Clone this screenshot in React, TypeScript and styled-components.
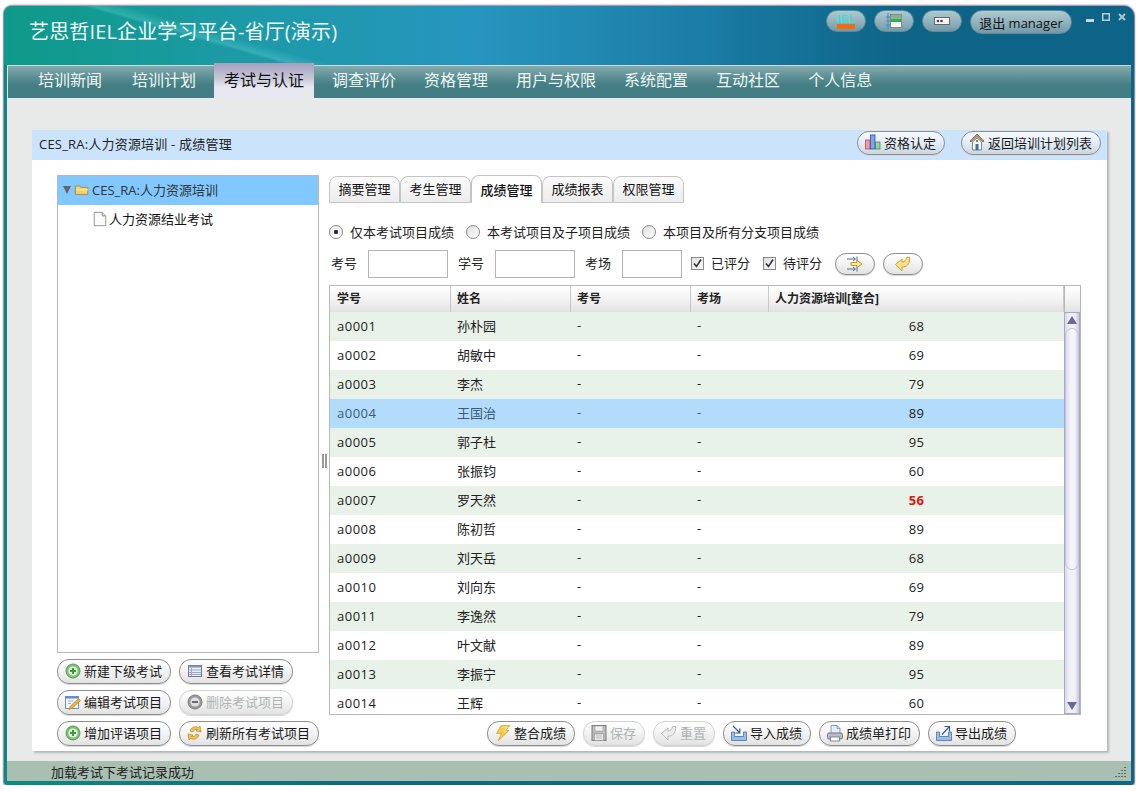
import React from "react";
import styled, { createGlobalStyle } from "styled-components";

const GlobalStyle = createGlobalStyle`
  html, body {
    margin: 0;
    padding: 0;
    background: #fff;
    font-family: "Open Sans", "Noto Sans CJK SC", sans-serif;
    font-size: 13px;
    color: #222;
  }
`;

const Window = styled.div`
  margin: 6px 0 0 4px;
  width: 1130px;
  height: 779px;
  box-sizing: border-box;
  display: flex;
  flex-direction: column;
  padding: 0 3px 4px;
  border-radius: 8px 10px 3px 3px;
  background: linear-gradient(90deg, #0c8a80 0, #10697f 30%, #0e6487 100%);
  box-shadow: 0 -1px 2px #8c88a4, 0 1px 2px #8c88a4, -1px 0 1px #9a98b0, 1px 0 1px #6f7f94;
`;

const Header = styled.div`
  height: 59px;
  margin: 0 -3px;
  padding: 0 8px 0 25px;
  display: flex;
  align-items: flex-start;
  justify-content: space-between;
  border-radius: 8px 10px 0 0;
  background:
    linear-gradient(16deg, transparent 0 50%, rgba(120, 225, 225, 0.28) 52%, transparent 58%) 0 0 / 360px 100% no-repeat,
    linear-gradient(90deg, #0e9a88 0, #1d9aa8 22%, #2795bf 42%, #1b7ca5 62%, #0e6487 80%, #0e6487 100%);
`;

const AppTitle = styled.div`
  margin-top: 11px;
  font-size: 20px;
  line-height: 30px;
  letter-spacing: 0.15px;
  color: #f2fbfb;
  white-space: nowrap;
`;

const HeaderTools = styled.div`
  display: flex;
  align-items: flex-start;
  margin-top: 4px;
  gap: 8px;
`;

const HeaderPill = styled.div<{ $wide?: boolean }>`
  width: ${({ $wide }) => ($wide ? "102px" : "40px")};
  height: ${({ $wide }) => ($wide ? "24px" : "22px")};
  box-sizing: border-box;
  display: flex;
  align-items: center;
  justify-content: center;
  border: 1px solid #5f8a9c;
  border-radius: 12px;
  background: linear-gradient(180deg, #aecad2 0, #93b3bd 50%, #739aa9 100%);
  font-size: 13px;
  color: #111;
  white-space: nowrap;
`;

const WindowControls = styled.div`
  display: flex;
  margin-left: 6px;
  margin-top: 3px;
  gap: 8px;
`;

const Nav = styled.div`
  height: 33px;
  box-sizing: border-box;
  display: flex;
  align-items: stretch;
  gap: 8px;
  padding-left: 20px;
  border-top: 1px solid #c8dcdd;
  border-left: 1px solid #d8e6e6;
  background: linear-gradient(180deg, #86abaf 0, #5c8f94 35%, #427e83 60%, #427e83 100%);
`;

const NavItem = styled.div<{ $active?: boolean }>`
  padding: 0 10px;
  font-size: 16px;
  line-height: 28px;
  white-space: nowrap;
  color: ${({ $active }) => ($active ? "#111" : "#eef6f6")};
  &:first-child {
    margin-right: 2px;
  }
  ${({ $active }) =>
    $active &&
    `
    margin-top: -3px;
    line-height: 34px;
    background: linear-gradient(180deg, #a3a1bd 0, #c9c8da 45%, #e8e8f2 70%, #e8e8f2 100%);
  `}
`;

const Content = styled.div`
  flex: 1;
  min-height: 0;
  padding: 32px 24px 10px 25px;
  background: #e8eaea;
`;

const Card = styled.div`
  height: 100%;
  display: flex;
  flex-direction: column;
  background: #fff;
  box-shadow: 2px 2px 2px #b4b6b6;
`;

const CardTitle = styled.div`
  height: 30px;
  flex: none;
  box-sizing: border-box;
  display: flex;
  align-items: center;
  justify-content: space-between;
  padding: 0 6px 4px 7px;
  background: #cce4fb;
  color: #222;
`;

const CardHeading = styled.span`
  letter-spacing: 0.2px;
`;

const TitleActions = styled.div`
  display: flex;
  gap: 16px;
`;

const CardBody = styled.div`
  flex: 1;
  min-height: 0;
  display: grid;
  grid-template-columns: 262px 10px 752px;
  padding: 15px 25px 5px;
`;

const LeftColumn = styled.div`
  display: flex;
  flex-direction: column;
  min-height: 0;
`;

const Tree = styled.div`
  flex: 1;
  border: 1px solid #b8b8b8;
  background: #fff;
`;

const TreeRoot = styled.div`
  height: 29px;
  box-sizing: border-box;
  display: flex;
  align-items: center;
  padding: 0 0 2px 5px;
  gap: 2px;
  background: #80c8ff;
  color: #333;
`;

const TreeChild = styled.div`
  height: 29px;
  box-sizing: border-box;
  display: flex;
  align-items: center;
  padding: 0 0 2px 34px;
  gap: 1px;
  color: #111;
`;

const Caret = styled.span`
  width: 0;
  height: 0;
  margin-right: 1px;
  border-left: 4px solid transparent;
  border-right: 4px solid transparent;
  border-top: 8px solid #666;
`;

const ActionRows = styled.div`
  display: flex;
  flex-direction: column;
  gap: 6px;
  margin-top: 6px;
`;

const ActionRow = styled.div`
  display: flex;
  gap: 8px;
`;

const PillButton = styled.div<{ $disabled?: boolean }>`
  height: 25px;
  box-sizing: border-box;
  display: inline-flex;
  align-items: center;
  justify-content: center;
  gap: 2px;
  padding: 0 8px 2px 6px;
  flex: none;
  white-space: nowrap;
  border: 1px solid ${({ $disabled }) => ($disabled ? "#d2d2d2" : "#8e8e8e")};
  border-radius: 12px;
  color: ${({ $disabled }) => ($disabled ? "#aeb4b4" : "#1a1a1a")};
  background: linear-gradient(180deg, #fff 0, #f4f4f4 45%, #e2e2e2 100%);
  box-shadow: 0 1px 0 #d8d8d8;
`;

const TitleButton = styled(PillButton)`
  height: 24px;
  background: linear-gradient(180deg, #f5f9fd 0, #e4edf6 50%, #c9d6e2 100%);
`;

const IconButton = styled(PillButton)`
  width: 40px;
  height: 22px;
  padding: 0;
`;

const Splitter = styled.div`
  display: flex;
  align-items: center;
  justify-content: center;
  gap: 1px;
  &::before,
  &::after {
    content: "";
    width: 2px;
    height: 14px;
    background: #9a9a9a;
  }
`;

const RightColumn = styled.div`
  display: flex;
  flex-direction: column;
  min-height: 0;
`;

const Tabs = styled.div`
  display: flex;
  align-items: flex-end;
  height: 28px;
`;

const Tab = styled.div<{ $active?: boolean }>`
  box-sizing: border-box;
  width: 71px;
  height: ${({ $active }) => ($active ? "28px" : "27px")};
  line-height: ${({ $active }) => ($active ? "28px" : "24px")};
  text-align: center;
  border: 1px solid #c4c4c4;
  border-bottom: ${({ $active }) => ($active ? "none" : "1px solid #c4c4c4")};
  border-radius: 8px 8px 0 0;
  background: ${({ $active }) => ($active ? "#fff" : "linear-gradient(180deg, #fbfbfb 0, #ececec 100%)")};
  color: #111;
  font-weight: ${({ $active }) => ($active ? 500 : 400)};
`;

const RadioRow = styled.div`
  display: flex;
  align-items: center;
  height: 20px;
  margin-top: 19px;
`;

const RadioLabel = styled.label`
  display: flex;
  align-items: center;
  gap: 7px;
  margin-right: 12px;
  color: #222;
`;

const Radio = styled.span<{ $on?: boolean }>`
  width: 14px;
  height: 14px;
  box-sizing: border-box;
  border: 1px solid #8a8a8a;
  border-radius: 50%;
  background: ${({ $on }) =>
    $on ? "radial-gradient(circle, #333 0 2px, transparent 2.5px), linear-gradient(#eee, #fff)" : "linear-gradient(135deg, #ddd, #fff)"};
`;

const FilterRow = styled.div`
  display: flex;
  align-items: center;
  height: 28px;
  margin-top: 8px;
  padding-left: 2px;
`;

const FieldLabel = styled.span`
  width: 26px;
  margin: 0 11px 2px 0;
  color: #222;
`;

const TextField = styled.div<{ $w: number }>`
  width: ${({ $w }) => $w}px;
  height: 28px;
  box-sizing: border-box;
  margin-right: 10px;
  border: 1px solid #b4b4b4;
  background: #fff;
  &:nth-child(6) {
    margin-right: 9px;
  }
`;

const CheckLabel = styled.label`
  display: flex;
  align-items: center;
  gap: 7px;
  margin-right: 13px;
  color: #222;
`;

const CheckText = styled.span`
  margin-bottom: 2px;
`;

const Check = styled.span`
  width: 13px;
  height: 13px;
  box-sizing: border-box;
  display: flex;
  border: 1px solid #8a8a8a;
  background: linear-gradient(135deg, #ddd, #fff);
`;

const FilterButtons = styled.div`
  display: flex;
  gap: 8px;
`;

const TableWrap = styled.div`
  height: 431px;
  margin-top: 7px;
  box-sizing: border-box;
  display: flex;
  flex-direction: column;
  border: 1px solid #b8b8b8;
  overflow: hidden;
`;

const COLUMNS = "121px 120px 120px 78px 295px 16px";

const HeadRow = styled.div`
  flex: none;
  height: 26px;
  display: grid;
  grid-template-columns: ${COLUMNS};
  background: linear-gradient(180deg, #fff 0, #f4f4f4 50%, #e2e2e2 100%);
`;

const HeadCell = styled.div`
  padding-left: 6px;
  line-height: 25px;
  font-size: 12px;
  font-weight: 700;
  color: #222;
  border-right: 1px solid #c8c8c8;
  &:first-child {
    padding-left: 7px;
  }
  &:last-child {
    border-right: none;
    border-left: 1px solid #b8b8b8;
  }
`;

const TableBody = styled.div`
  flex: 1;
  min-height: 0;
  display: flex;
  overflow: hidden;
`;

const Rows = styled.div`
  width: 734px;
  flex: none;
`;

const Row = styled.div<{ $odd: boolean; $selected: boolean }>`
  height: 29px;
  display: grid;
  grid-template-columns: 121px 120px 120px 78px 295px;
  align-items: center;
  background: ${({ $odd, $selected }) => ($selected ? "#b3dcfc" : $odd ? "#e8f2e8" : "#fff")};
  color: ${({ $selected }) => ($selected ? "#3a5a7a" : "#222")};
`;

const Cell = styled.div`
  padding: 0 0 2px 6px;
`;

const IdCell = styled.div`
  padding-left: 7px;
  letter-spacing: 0.5px;
`;

const ScoreCell = styled.div<{ $fail: boolean }>`
  text-align: center;
  letter-spacing: 0.3px;
  color: ${({ $fail }) => ($fail ? "#e81010" : "#222")};
  font-weight: ${({ $fail }) => ($fail ? 700 : 400)};
`;

const ScrollBar = styled.div`
  width: 16px;
  flex: none;
  box-sizing: border-box;
  display: flex;
  flex-direction: column;
  align-items: center;
  border: 1px solid #a8a8cc;
  background: linear-gradient(90deg, #d8d8e8 0, #f0f0f6 30%, #f0f0f6 70%, #c8c8dc 100%);
`;

const ScrollArrow = styled.div<{ $down?: boolean }>`
  flex: none;
  height: 15px;
  width: 100%;
  display: flex;
  align-items: center;
  justify-content: center;
  &::after {
    content: "";
    border-left: 5px solid transparent;
    border-right: 5px solid transparent;
    ${({ $down }) => ($down ? "border-top: 8px solid #6a6a9a;" : "border-bottom: 8px solid #6a6a9a;")}
  }
`;

const ScrollThumb = styled.div`
  flex: none;
  width: 100%;
  height: 242px;
  box-sizing: border-box;
  border: 1px solid #c4c4d8;
  border-radius: 8px;
  background: linear-gradient(90deg, #dcdcec 0, #f4f4fa 35%, #f4f4fa 70%, #d4d4e4 100%);
`;

const ScrollTrack = styled.div`
  flex: 1;
`;

const BottomActions = styled.div`
  display: flex;
  gap: 8px;
  margin-top: 6px;
  padding-left: 158px;
`;

const StatusBar = styled.div`
  height: 20px;
  flex: none;
  box-sizing: border-box;
  display: flex;
  align-items: center;
  justify-content: space-between;
  padding: 0 5px 0 44px;
  background: #a9bfb2;
  color: #222;
`;

const Svg: React.FC<React.PropsWithChildren<{ w?: number; h?: number }>> = ({ w = 18, h = 18, children }) => (
  <svg width={w} height={h} viewBox="0 0 18 18" style={{ flex: "none" }}>
    {children}
  </svg>
);

const AddIcon = () => (
  <Svg>
    <circle cx="9" cy="9" r="7" fill="#7cc274" stroke="#5a9a56" />
    <circle cx="9" cy="9" r="4.6" fill="#e4f3de" />
    <path d="M9 6v6M6 9h6" stroke="#3d9a3d" strokeWidth="2" />
  </Svg>
);

const RemoveIcon = () => (
  <Svg>
    <circle cx="9" cy="9" r="7" fill="#9a9a9a" stroke="#7c7c7c" />
    <circle cx="9" cy="9" r="4.6" fill="#e0e0e0" />
    <path d="M6 9h6" stroke="#6a6a6a" strokeWidth="2" />
  </Svg>
);

const ListIcon = () => (
  <Svg>
    <rect x="2.500" y="3.500" width="13" height="11" fill="#eef1f8" stroke="#6b7ba6" />
    <path d="M2.500 3.500h13v2h-13z" fill="#7f8fb8" />
    <path d="M5.500 6v8M3 8h12M3 10.500h12M3 12.500h12" stroke="#9aa7c8" />
  </Svg>
);

const EditIcon = () => (
  <Svg>
    <rect x="1.500" y="3.500" width="13" height="12" fill="#f4f7fc" stroke="#6f8fc0" />
    <path d="M1.500 3.500h13v2h-13z" fill="#5d8fd0" />
    <path d="M4 8h5M4 10.500h3" stroke="#9ab0d0" />
    <path d="M5 16.500l1.500-3.500 8-7.500 2 2-8 7.500z" fill="#f0b040" stroke="#c08020" strokeWidth=".7" />
  </Svg>
);

const RefreshIcon = () => (
  <Svg>
    <path d="M14 2l1 6-5-1 1.500-1.500C9.500 5 7.500 6 7 8L4 7c1-3.500 5-5.500 8.500-3.500z" fill="#eec24a" stroke="#b08018" strokeWidth=".6" />
    <path d="M3 16l-1-6 5 1-1.500 1.500c2 .5 4-.5 4.500-2.500l3 1c-1 3.500-5 5.500-8.500 3.500z" fill="#eec24a" stroke="#b08018" strokeWidth=".6" />
  </Svg>
);

const BoltIcon = () => (
  <Svg>
    <path d="M7 1.500h9L11.500 6.500H15L4 17l3.500-7.500H2.500z" fill="#f4cc4a" stroke="#c8a030" strokeWidth=".7" />
    <path d="M8 3h5.500L10 7h2.500" fill="none" stroke="#fbeaa0" strokeWidth=".8" />
  </Svg>
);

const SaveIcon = () => (
  <Svg>
    <rect x="2" y="1.500" width="14" height="15" fill="#bcbcbc" stroke="#7c7c7c" />
    <rect x="5" y="2" width="8" height="5" fill="#f0f0f0" stroke="#999" strokeWidth=".5" />
    <rect x="4.500" y="10" width="9" height="6.500" fill="#eee" stroke="#8a8a8a" strokeWidth=".6" />
    <path d="M6 12h6M6 14h6" stroke="#aaa" strokeWidth=".8" />
  </Svg>
);

const ReturnArrow = ({ color, line }: { color: string; line: string }) => (
  <Svg>
    <path d="M1.500 9.500L8 4v3c2.500 0 4-1.500 4.500-4.500h3c.5 5-1.500 9-6 9.500H8v4z" fill={color} stroke={line} strokeWidth=".9" strokeLinejoin="round" />
  </Svg>
);

const ImportIcon = () => (
  <Svg>
    <path d="M1.500 8h3v4.500h9V8h3v8.500h-15z" fill="#9dbfe2" stroke="#4a70a8" strokeWidth=".8" />
    <path d="M3 2l6.500 6.500M9.800 4.500v4.500H5.300" stroke="#2f5f9a" fill="none" strokeWidth="1.200" />
  </Svg>
);

const ExportIcon = () => (
  <Svg>
    <path d="M1.500 8h3v4.500h9V8h3v8.500h-15z" fill="#9dbfe2" stroke="#4a70a8" strokeWidth=".8" />
    <path d="M7 10.500l7-7.500M9.500 2.500h5v5" stroke="#2f5f9a" fill="none" strokeWidth="1.200" />
  </Svg>
);

const PrintIcon = () => (
  <Svg>
    <path d="M5 1.500h6l3 3v6H5z" fill="#e4edf8" stroke="#6c87b0" strokeWidth=".8" />
    <path d="M11 1.500v3h3" fill="#bcd0e8" stroke="#6c87b0" strokeWidth=".6" />
    <rect x="1.500" y="9" width="15" height="6" rx="1.500" fill="#b8bcc4" stroke="#70747c" />
    <rect x="4.500" y="13" width="9" height="4" fill="#fff" stroke="#70747c" strokeWidth=".8" />
  </Svg>
);

const ChartIcon = () => (
  <Svg>
    <rect x="1.500" y="7" width="4.500" height="9" fill="#f59aa0" stroke="#c04860" strokeWidth=".8" />
    <rect x="6.500" y="2" width="4.500" height="14" fill="#7fa4ec" stroke="#2850b8" strokeWidth=".8" />
    <rect x="11.500" y="9" width="4.500" height="7" fill="#9ad09a" stroke="#3f8a4a" strokeWidth=".8" />
  </Svg>
);

const HouseIcon = () => (
  <Svg>
    <path d="M9 1L2 8l1 1 6-5.500L15 9l1-1z" fill="#b89a60" stroke="#705a30" strokeWidth=".7" />
    <path d="M4.500 9L9 5l4.500 4v8h-9z" fill="#fbfbf2" stroke="#5a6a7a" strokeWidth=".8" />
    <rect x="7.500" y="11" width="3" height="6" fill="#3f6fb0" />
    <rect x="8" y="7" width="2" height="2" fill="#5fa05f" />
  </Svg>
);

const SwapIcon = () => (
  <Svg>
    <path d="M1 4h8M7 2l2.500 2L7 6M11 1.500v5M1 14h8M7 12l2.500 2L7 16M11 11.500v5" stroke="#4f7590" strokeWidth="1" fill="none" />
    <path d="M5 7.500h6V5.500L16 9l-5 3.500v-2H5z" fill="#fbe8a0" stroke="#c89a30" strokeWidth="1" />
  </Svg>
);

const FolderIcon = () => (
  <Svg w={16} h={16}>
    <path d="M1.500 14V4.500h5l1 1.500h8v8z" fill="#f4cf6a" stroke="#a88a3a" />
    <path d="M2.500 8h13v1.500h-13z" fill="#fbe8a8" />
  </Svg>
);

const DocIcon = () => (
  <Svg w={16} h={18}>
    <path d="M2.500 1.500h9l4 4v11h-13z" fill="#fbfbfb" stroke="#8c8c8c" />
    <path d="M11.500 1.500v4h4" fill="#ddd" stroke="#8c8c8c" />
  </Svg>
);

const IelLabel = styled.text`
  font-family: "Liberation Sans", sans-serif;
  font-size: 11px;
  font-weight: 700;
  letter-spacing: 0.5px;
  fill: #3fe0d8;
`;

const IelIcon = () => (
  <svg width="18" height="19" viewBox="0 0 18 19">
    <IelLabel x="0" y="11">IEL</IelLabel>
    <rect x="0" y="12" width="18" height="5" fill="#f06a10" />
  </svg>
);

const ColumnsIcon = () => (
  <svg width="18" height="18" viewBox="0 0 18 18">
    <path d="M3 1v16M1 5h5M1 9h5M1 13h5" stroke="#3f8ac8" strokeWidth="1" />
    <rect x="5.500" y="2.500" width="11" height="13" fill="#fff" stroke="#555" strokeWidth=".6" />
    <rect x="6" y="3" width="10" height="3.500" fill="#8faf94" />
    <rect x="6" y="6.500" width="10" height="3.500" fill="#2fb04a" />
  </svg>
);

const PasswordIcon = () => (
  <svg width="16" height="8" viewBox="0 0 16 8">
    <rect x="0.500" y="0.500" width="15" height="7" fill="#f4f4f4" stroke="#666" />
    <circle cx="4" cy="4" r="1.300" fill="#444" />
    <circle cx="7.500" cy="4" r="1.300" fill="#444" />
  </svg>
);

const CheckMark = () => (
  <svg width="11" height="11" viewBox="0 0 11 11">
    <path d="M2 5.500l2.500 3L9 1.500" stroke="#333" strokeWidth="1.600" fill="none" />
  </svg>
);

const MinIcon = () => (
  <svg width="8" height="10" viewBox="0 0 8 10"><rect y="6" width="8" height="3" fill="#c8d8e0" /></svg>
);
const MaxIcon = () => (
  <svg width="8" height="10" viewBox="0 0 8 10"><rect x=".75" y=".75" width="6.500" height="6.500" fill="none" stroke="#b8ccd6" strokeWidth="1.500" /></svg>
);
const CloseIcon = () => (
  <svg width="8" height="10" viewBox="0 0 8 10"><path d="M1 1l6 6M7 1L1 7" stroke="#b0c4ce" strokeWidth="2" /></svg>
);

const Grip = () => (
  <svg width="11" height="11" viewBox="0 0 11 11">
    <path d="M10 1v1M7 4v1M10 4v1M4 7v1M7 7v1M10 7v1M1 10v1M4 10v1M7 10v1M10 10v1" stroke="#334" strokeWidth="1.200" />
  </svg>
);

const NAV = ["培训新闻", "培训计划", "考试与认证", "调查评价", "资格管理", "用户与权限", "系统配置", "互动社区", "个人信息"];
const TABS = ["摘要管理", "考生管理", "成绩管理", "成绩报表", "权限管理"];
const RADIOS = ["仅本考试项目成绩", "本考试项目及子项目成绩", "本项目及所有分支项目成绩"];
const ROWS: [string, string, number][] = [
  ["a0001", "孙朴园", 68],
  ["a0002", "胡敏中", 69],
  ["a0003", "李杰", 79],
  ["a0004", "王国治", 89],
  ["a0005", "郭子杜", 95],
  ["a0006", "张振钧", 60],
  ["a0007", "罗天然", 56],
  ["a0008", "陈初哲", 89],
  ["a0009", "刘天岳", 68],
  ["a0010", "刘向东", 69],
  ["a0011", "李逸然", 79],
  ["a0012", "叶文献", 89],
  ["a0013", "李振宁", 95],
  ["a0014", "王辉", 60],
];

const App: React.FC = () => {
  return (
    <>
      <GlobalStyle />
      <Window>
        <Header>
          <AppTitle>艺思哲IEL企业学习平台-省厅(演示)</AppTitle>
          <HeaderTools>
            <HeaderPill><IelIcon /></HeaderPill>
            <HeaderPill><ColumnsIcon /></HeaderPill>
            <HeaderPill><PasswordIcon /></HeaderPill>
            <HeaderPill $wide>退出 manager</HeaderPill>
            <WindowControls>
              <MinIcon />
              <MaxIcon />
              <CloseIcon />
            </WindowControls>
          </HeaderTools>
        </Header>
        <Nav>
          {NAV.map((n) => (
            <NavItem key={n} $active={n === "考试与认证"}>{n}</NavItem>
          ))}
        </Nav>
        <Content>
          <Card>
            <CardTitle>
              <CardHeading>CES_RA:人力资源培训 - 成绩管理</CardHeading>
              <TitleActions>
                <TitleButton><ChartIcon />资格认定</TitleButton>
                <TitleButton><HouseIcon />返回培训计划列表</TitleButton>
              </TitleActions>
            </CardTitle>
            <CardBody>
              <LeftColumn>
                <Tree>
                  <TreeRoot><Caret /><FolderIcon />CES_RA:人力资源培训</TreeRoot>
                  <TreeChild><DocIcon />人力资源结业考试</TreeChild>
                </Tree>
                <ActionRows>
                  <ActionRow>
                    <PillButton><AddIcon />新建下级考试</PillButton>
                    <PillButton><ListIcon />查看考试详情</PillButton>
                  </ActionRow>
                  <ActionRow>
                    <PillButton><EditIcon />编辑考试项目</PillButton>
                    <PillButton $disabled><RemoveIcon />删除考试项目</PillButton>
                  </ActionRow>
                  <ActionRow>
                    <PillButton><AddIcon />增加评语项目</PillButton>
                    <PillButton><RefreshIcon />刷新所有考试项目</PillButton>
                  </ActionRow>
                </ActionRows>
              </LeftColumn>
              <Splitter />
              <RightColumn>
                <Tabs>
                  {TABS.map((t) => (
                    <Tab key={t} $active={t === "成绩管理"}>{t}</Tab>
                  ))}
                </Tabs>
                <RadioRow>
                  {RADIOS.map((r, i) => (
                    <RadioLabel key={r}><Radio $on={i === 0} />{r}</RadioLabel>
                  ))}
                </RadioRow>
                <FilterRow>
                  <FieldLabel>考号</FieldLabel>
                  <TextField $w={80} />
                  <FieldLabel>学号</FieldLabel>
                  <TextField $w={80} />
                  <FieldLabel>考场</FieldLabel>
                  <TextField $w={60} />
                  <CheckLabel><Check><CheckMark /></Check><CheckText>已评分</CheckText></CheckLabel>
                  <CheckLabel><Check><CheckMark /></Check><CheckText>待评分</CheckText></CheckLabel>
                  <FilterButtons>
                    <IconButton><SwapIcon /></IconButton>
                    <IconButton><ReturnArrow color="#fbe08a" line="#c89a30" /></IconButton>
                  </FilterButtons>
                </FilterRow>
                <TableWrap>
                  <HeadRow>
                    <HeadCell>学号</HeadCell>
                    <HeadCell>姓名</HeadCell>
                    <HeadCell>考号</HeadCell>
                    <HeadCell>考场</HeadCell>
                    <HeadCell>人力资源培训[整合]</HeadCell>
                    <HeadCell />
                  </HeadRow>
                  <TableBody>
                    <Rows>
                      {ROWS.map(([id, name, score], i) => (
                        <Row key={id} $odd={i % 2 === 0} $selected={i === 3}>
                          <IdCell>{id}</IdCell>
                          <Cell>{name}</Cell>
                          <Cell>-</Cell>
                          <Cell>-</Cell>
                          <ScoreCell $fail={score < 60}>{score}</ScoreCell>
                        </Row>
                      ))}
                    </Rows>
                    <ScrollBar>
                      <ScrollArrow />
                      <ScrollThumb />
                      <ScrollTrack />
                      <ScrollArrow $down />
                    </ScrollBar>
                  </TableBody>
                </TableWrap>
                <BottomActions>
                  <PillButton><BoltIcon />整合成绩</PillButton>
                  <PillButton $disabled><SaveIcon />保存</PillButton>
                  <PillButton $disabled><ReturnArrow color="#eeeeee" line="#b4b4b4" />重置</PillButton>
                  <PillButton><ImportIcon />导入成绩</PillButton>
                  <PillButton><PrintIcon />成绩单打印</PillButton>
                  <PillButton><ExportIcon />导出成绩</PillButton>
                </BottomActions>
              </RightColumn>
            </CardBody>
          </Card>
        </Content>
        <StatusBar>
          <span>加载考试下考试记录成功</span>
          <Grip />
        </StatusBar>
      </Window>
    </>
  );
};

export default App;
